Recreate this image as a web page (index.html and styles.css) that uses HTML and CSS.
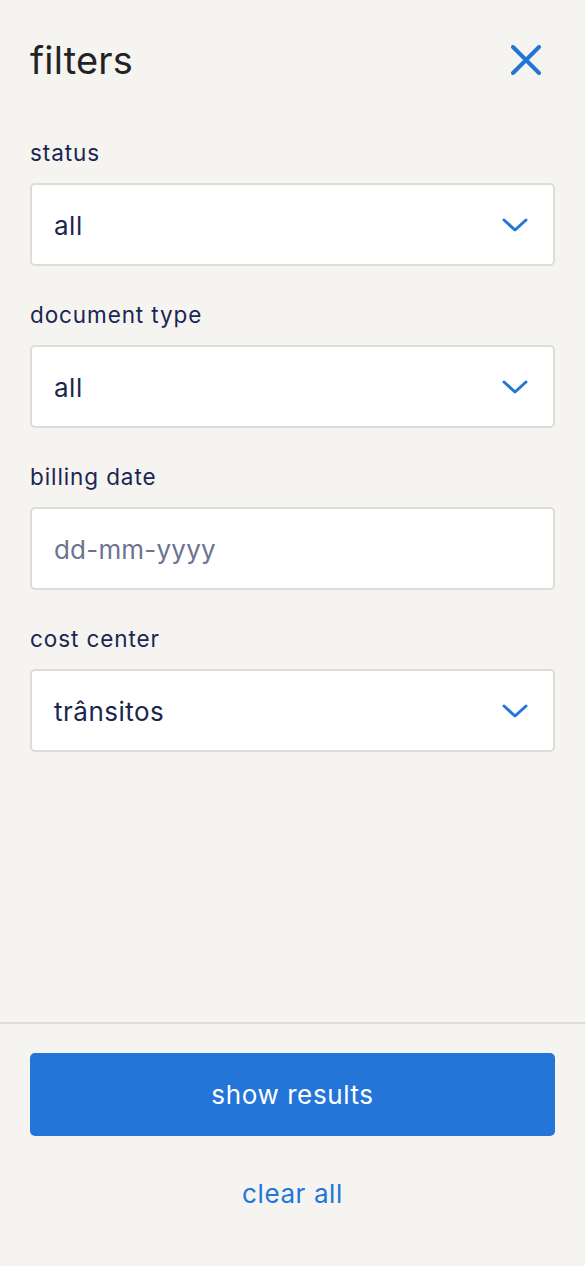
FILE: index.html
```html
<!DOCTYPE html>
<html lang="en">
<head>
<meta charset="utf-8">
<link rel="stylesheet" href="styles.css">
</head>
<body>
<div class="panel">
  <div class="content">
    <header class="header">
      <h1 class="title">filters</h1>
      <button class="close" aria-label="close">
        <svg width="30" height="30" viewBox="0 0 30 30"><path d="M2 2 L28 28 M28 2 L2 28" stroke="#2475d8" stroke-width="4" stroke-linecap="round" fill="none"/></svg>
      </button>
    </header>
    <div class="fields">
      <div class="field">
        <div class="label">status</div>
        <div class="box"><span class="value">all</span><svg class="chev" width="26" height="14" viewBox="0 0 26 14"><path d="M2 2 L13 12 L24 2" stroke="#2475d8" stroke-width="3" stroke-linecap="round" stroke-linejoin="round" fill="none"/></svg></div>
      </div>
      <div class="field">
        <div class="label">document type</div>
        <div class="box"><span class="value">all</span><svg class="chev" width="26" height="14" viewBox="0 0 26 14"><path d="M2 2 L13 12 L24 2" stroke="#2475d8" stroke-width="3" stroke-linecap="round" stroke-linejoin="round" fill="none"/></svg></div>
      </div>
      <div class="field">
        <div class="label">billing date</div>
        <div class="box"><span class="value placeholder">dd-mm-yyyy</span></div>
      </div>
      <div class="field">
        <div class="label">cost center</div>
        <div class="box"><span class="value">trânsitos</span><svg class="chev" width="26" height="14" viewBox="0 0 26 14"><path d="M2 2 L13 12 L24 2" stroke="#2475d8" stroke-width="3" stroke-linecap="round" stroke-linejoin="round" fill="none"/></svg></div>
      </div>
    </div>
  </div>
  <footer class="footer">
    <button class="primary">show results</button>
    <button class="link">clear all</button>
  </footer>
</div>
</body>
</html>
```
FILE: styles.css
```css
* { box-sizing: border-box; }
html, body { margin: 0; padding: 0; }
body {
  background: #f5f4f0;
  font-family: Inter, "Noto Sans", "Liberation Sans", sans-serif;
  color: #1b2650;
}
.panel {
  height: 1266px;
  display: flex;
  flex-direction: column;
}
.content {
  flex: 1;
  padding: 30px 30px 0 31px;
}
.header {
  height: 60px;
  display: flex;
  align-items: center;
  justify-content: space-between;
}
.title {
  margin: 0;
  font-size: 38px;
  font-weight: 400;
  color: #232323;
  letter-spacing: 0.2px;
  margin-left: -1px;
}
.close {
  border: 0;
  background: none;
  padding: 0;
  margin-right: 14px;
  width: 30px;
  height: 30px;
  display: flex;
}
.fields {
  margin-top: 50px;
  display: flex;
  flex-direction: column;
  gap: 36px;
}
.label {
  font-size: 22.5px;
  line-height: 26px;
  letter-spacing: 0.9px;
  margin-bottom: 17px;
  margin-left: -1px;
}
.box {
  height: 83px;
  margin-left: -1px;
  background: #fff;
  border: 2px solid #dddcd8;
  border-radius: 5px;
  display: flex;
  align-items: center;
  justify-content: space-between;
  padding: 0 25px 0 22px;
}
.value {
  font-size: 26px;
  letter-spacing: 0.5px;
  padding-top: 2px;
}
.placeholder {
  color: #6b7490;
  letter-spacing: 0.2px;
}
.footer {
  border-top: 2px solid #dddcd8;
  padding: 29px 30px 0;
  height: 244px;
  display: flex;
  flex-direction: column;
  align-items: center;
}
.primary {
  width: 100%;
  height: 83px;
  border: 0;
  border-radius: 5px;
  background: #2475d8;
  color: #fff;
  font-family: inherit;
  font-size: 26px;
  letter-spacing: 0.6px;
}
.link {
  margin-top: 42px;
  border: 0;
  background: none;
  color: #2475d8;
  font-family: inherit;
  font-size: 26px;
  letter-spacing: 0.6px;
  padding: 0;
}
```
